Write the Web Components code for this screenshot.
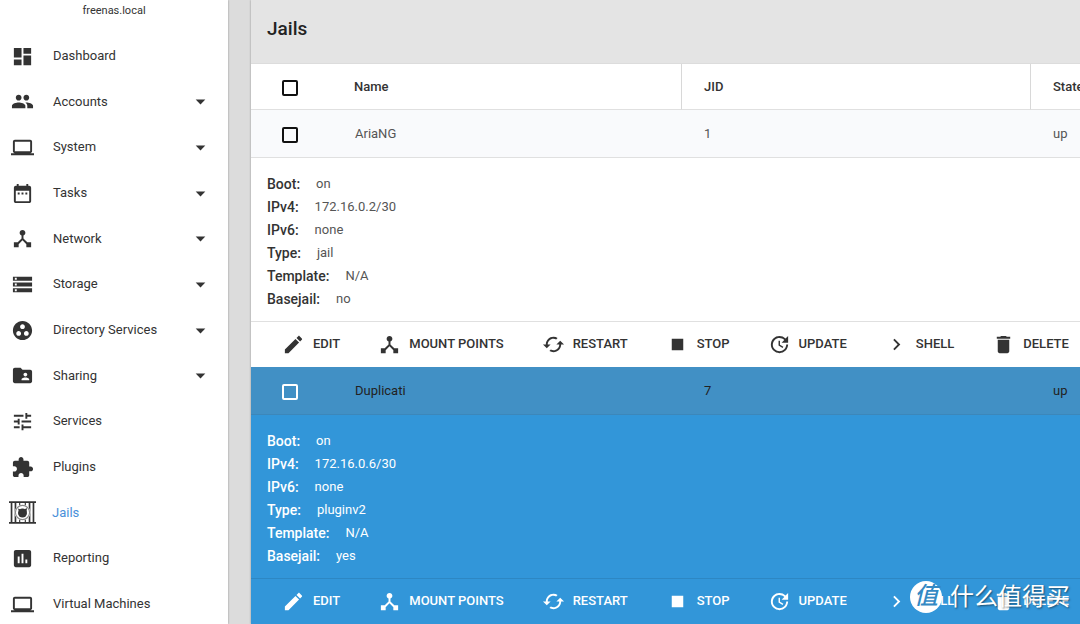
<!DOCTYPE html>
<html lang="en">
<head>
<meta charset="utf-8">
<title>Jails - freenas.local</title>
<style>
  html, body { margin: 0; height: 100%; }
  body { overflow: hidden; background: #dcdcdc; color: #333; font: 13px/20px Roboto, "Noto Sans CJK SC", sans-serif; }
</style>
</head>
<body>
<nas-shell>
  <side-nav slot="nav" host="freenas.local"></side-nav>
  <jails-card heading="Jails"></jails-card>
  <brand-mark slot="overlay" glyph="值">什么值得买</brand-mark>
</nas-shell>

<script>
const ICONS = {
  dashboard: '<path d="M3 13h8V3H3v10zm0 8h8v-6H3v6zm10 0h8V11h-8v10zm0-18v6h8V3h-8z"/>',
  people: '<path d="M16 11c1.66 0 2.99-1.34 2.99-3S17.66 5 16 5s-3 1.34-3 3 1.34 3 3 3zm-8 0c1.66 0 2.99-1.34 2.99-3S9.66 5 8 5 5 6.34 5 8s1.34 3 3 3zm0 2c-2.33 0-7 1.17-7 3.5V19h14v-2.5c0-2.33-4.67-3.5-7-3.5zm8 0c-.29 0-.62.02-.97.05 1.16.84 1.97 1.97 1.97 3.45V19h6v-2.5c0-2.33-4.67-3.5-7-3.5z"/>',
  laptop: '<path d="M20 18c1.1 0 1.99-.9 1.99-2L22 6c0-1.1-.9-2-2-2H4c-1.1 0-2 .9-2 2v10c0 1.1.9 2 2 2H0v2h24v-2h-4zM4 6h16v10H4V6z"/>',
  calendar: '<path d="M9 11H7v2h2v-2zm4 0h-2v2h2v-2zm4 0h-2v2h2v-2zm2-7h-1V2h-2v2H8V2H6v2H5c-1.11 0-1.99.9-1.99 2L3 20c0 1.1.89 2 2 2h14c1.1 0 2-.9 2-2V6c0-1.1-.9-2-2-2zm0 16H5V9h14v11z"/>',
  hub: '<path d="M17 16l-4-4V8.82C14.16 8.4 15 7.3 15 6c0-1.66-1.34-3-3-3S9 4.34 9 6c0 1.3.84 2.4 2 2.82V12l-4 4H3v5h5v-3.05l4-4.2 4 4.2V21h5v-5h-4z"/>',
  storage: '<path d="M2 20h20v-4H2v4zm2-3h2v2H4v-2zM2 4v4h20V4H2zm4 3H4V5h2v2zm-4 7h20v-4H2v4zm2-3h2v2H4v-2z"/>',
  directory: '<path d="M12 2C6.48 2 2 6.48 2 12s4.48 10 10 10 10-4.48 10-10S17.52 2 12 2zM8 17.5c-1.38 0-2.5-1.12-2.5-2.5s1.12-2.5 2.5-2.5 2.5 1.12 2.5 2.5-1.12 2.5-2.5 2.5zM9.5 8c0-1.38 1.12-2.5 2.5-2.5s2.5 1.12 2.5 2.5-1.12 2.5-2.5 2.5S9.5 9.38 9.5 8zm6.5 9.5c-1.38 0-2.5-1.12-2.5-2.5s1.12-2.5 2.5-2.5 2.5 1.12 2.5 2.5-1.12 2.5-2.5 2.5z"/>',
  sharing: '<path d="M20 6h-8l-2-2H4c-1.1 0-1.99.9-1.99 2L2 18c0 1.1.9 2 2 2h16c1.1 0 2-.9 2-2V8c0-1.1-.9-2-2-2zm-5 3c1.1 0 2 .9 2 2s-.9 2-2 2-2-.9-2-2 .9-2 2-2zm4 8h-8v-1c0-1.33 2.67-2 4-2s4 .67 4 2v1z"/>',
  tune: '<path d="M3 17v2h6v-2H3zM3 5v2h10V5H3zm10 16v-2h8v-2h-8v-2h-2v6h2zM7 9v2H3v2h4v2h2V9H7zm14 4v-2H11v2h10zm-6-4h2V7h4V5h-4V3h-2v6z"/>',
  plugin: '<path d="M20.5 11H19V7c0-1.1-.9-2-2-2h-4V3.5C13 2.12 11.88 1 10.5 1S8 2.12 8 3.5V5H4c-1.1 0-1.99.9-1.99 2v3.8H3.5c1.49 0 2.7 1.21 2.7 2.7s-1.21 2.7-2.7 2.7H2V20c0 1.1.9 2 2 2h3.8v-1.5c0-1.49 1.21-2.7 2.7-2.7 1.49 0 2.7 1.21 2.7 2.7V22H17c1.1 0 2-.9 2-2v-4h1.5c1.38 0 2.5-1.12 2.5-2.5S21.88 11 20.5 11z"/>',
  jail: '<path d="M0 2h24v1.500H0zM0 20.500h24V22H0zM1.500 3H3v18H1.500zM5 3h1.500v18H5zM17.500 3H19v18h-1.500zM21 3h1.500v18H21z"/><path d="M9 3h1v3H9zM14 3h1v3h-1zM9 18h1v3H9zM14 18h1v3h-1z"/><circle cx="12" cy="12" r="7" fill="#fff"/><circle cx="12" cy="12" r="6.300" fill="none" stroke="#888" stroke-width="1"/><circle cx="12" cy="12.500" r="4"/><path d="M8 8.500l3 1-2 2.500zM13 9.500l3-1.500-.5 4z"/>',
  report: '<path d="M19 3H5c-1.1 0-2 .9-2 2v14c0 1.1.9 2 2 2h14c1.1 0 2-.9 2-2V5c0-1.1-.9-2-2-2zM9 17H7v-7h2v7zm4 0h-2V7h2v10zm4 0h-2v-4h2v4z"/>',
  caret: '<path d="M7 10l5 5 5-5z"/>',
  edit: '<path d="M3 17.25V21h3.75L17.81 9.94l-3.75-3.75L3 17.25zM20.71 7.04c.39-.39.39-1.02 0-1.41l-2.34-2.34c-.39-.39-1.02-.39-1.41 0l-1.83 1.83 3.75 3.75 1.83-1.83z"/>',
  restart: '<path d="M19 8l-4 4h3c0 3.31-2.69 6-6 6-1.01 0-1.97-.25-2.8-.7l-1.46 1.46C8.97 19.54 10.43 20 12 20c4.42 0 8-3.58 8-8h3l-4-4zM6 12c0-3.31 2.69-6 6-6 1.01 0 1.97.25 2.8.7l1.46-1.46C15.03 4.46 13.57 4 12 4c-4.42 0-8 3.58-8 8H1l4 4 4-4H6z"/>',
  stop: '<path d="M6 6h12v12H6z"/>',
  update: '<path d="M21 10.12h-6.78l2.74-2.82c-2.73-2.7-7.15-2.8-9.88-.1-2.73 2.71-2.73 7.08 0 9.79 2.73 2.71 7.15 2.71 9.88 0C18.32 15.65 19 14.08 19 12.1h2c0 1.98-.88 4.55-2.64 6.29-3.51 3.48-9.21 3.48-12.72 0-3.5-3.47-3.53-9.11-.02-12.58 3.51-3.47 9.14-3.47 12.65 0L21 3v7.12zM12.5 8v4.25l3.5 2.08-.72 1.21L11 13V8h1.5z"/>',
  shell: '<path d="M10 6L8.59 7.41 13.17 12l-4.58 4.59L10 18l6-6z"/>',
  trash: '<path d="M6 19c0 1.1.9 2 2 2h8c1.1 0 2-.9 2-2V7H6v12zM19 4h-3.5l-1-1h-5l-1 1H5v2h14V4z"/>'
};

const NAV = [
  ['Dashboard', 'dashboard'], ['Accounts', 'people', true], ['System', 'laptop', true],
  ['Tasks', 'calendar', true], ['Network', 'hub', true], ['Storage', 'storage', true],
  ['Directory Services', 'directory', true], ['Sharing', 'sharing', true], ['Services', 'tune'],
  ['Plugins', 'plugin'], ['Jails', 'jail'], ['Reporting', 'report'], ['Virtual Machines', 'laptop']
];

const JAILS = [
  { name: 'AriaNG', jid: 1, state: 'up', info: { Boot: 'on', IPv4: '172.16.0.2/30', IPv6: 'none', Type: 'jail', Template: 'N/A', Basejail: 'no' } },
  { name: 'Duplicati', jid: 7, state: 'up', current: true, info: { Boot: 'on', IPv4: '172.16.0.6/30', IPv6: 'none', Type: 'pluginv2', Template: 'N/A', Basejail: 'yes' } }
];

const ACTIONS = [
  ['EDIT', 'edit'], ['MOUNT POINTS', 'hub'], ['RESTART', 'restart'], ['STOP', 'stop'],
  ['UPDATE', 'update'], ['SHELL', 'shell'], ['DELETE', 'trash']
];

class BaseElement extends HTMLElement {
  connectedCallback() {
    if (!this.shadowRoot) this.attachShadow({ mode: 'open' }).innerHTML = this.view();
  }
}

customElements.define('nas-icon', class extends BaseElement {
  view() {
    return `<style>
      :host { display: block; flex: none; width: 23px; height: 23px; }
      svg { display: block; width: 100%; height: 100%; fill: currentColor; }
    </style>
    <svg viewBox="0 0 24 24" aria-hidden="true">${ICONS[this.getAttribute('name')]}</svg>`;
  }
});

customElements.define('nas-shell', class extends BaseElement {
  view() {
    return `<style>
      :host { display: grid; grid-template-columns: 228px minmax(0, 1fr); height: 100vh; overflow: hidden; position: relative; }
      main { padding-left: 23px; min-width: 0; }
    </style>
    <slot name="nav"></slot>
    <main><slot></slot></main>
    <slot name="overlay"></slot>`;
  }
});

customElements.define('nav-item', class extends BaseElement {
  view() {
    const a = n => this.getAttribute(n);
    return `<style>
      :host { display: block; }
      a { display: flex; align-items: center; height: 100%; padding: 0 16px 0 11px; color: #333; text-decoration: none; }
      span { flex: 1; margin-left: 19px; }
      .active span { color: #4a90d9; margin-left: 16px; }
      .active nas-icon { width: 27px; height: 27px; margin-left: -2px; }
    </style>
    <a href="#${a('icon')}" ${this.hasAttribute('active') ? 'class="active" aria-current="page"' : ''}>
      <nas-icon name="${a('icon')}"></nas-icon><span>${a('label')}</span>
      ${this.hasAttribute('expandable') ? '<nas-icon name="caret"></nas-icon>' : ''}
    </a>`;
  }
});

customElements.define('side-nav', class extends BaseElement {
  view() {
    return `<style>
      :host { display: block; background: #fff; overflow: hidden; box-shadow: 0 0 2px rgba(0,0,0,.35); }
      header { height: 33px; font-size: 11px; line-height: 22px; text-align: center; }
      nav { display: grid; grid-auto-rows: 46px 45px 46px; }
    </style>
    <header>${this.getAttribute('host')}</header>
    <nav>${NAV.map(([label, icon, more]) =>
      `<nav-item label="${label}" icon="${icon}"${more ? ' expandable' : ''}${label === 'Jails' ? ' active' : ''}></nav-item>`).join('')}</nav>`;
  }
});

customElements.define('jail-info', class extends BaseElement {
  view() {
    const info = JAILS[this.getAttribute('index')].info;
    return `<style>
      :host { display: block; padding: 15px 16px 10px; }
      dl { margin: 0; }
      div { display: flex; gap: 16px; line-height: 23px; }
      dt { font-size: 14px; font-weight: 500; }
      dd { margin: 0; line-height: 22px; color: var(--value-color, #555); }
    </style>
    <dl>${Object.entries(info).map(([k, v]) => `<div><dt>${k}:</dt><dd>${v}</dd></div>`).join('')}</dl>`;
  }
});

customElements.define('action-bar', class extends BaseElement {
  view() {
    return `<style>
      :host { display: flex; align-items: center; gap: 38px; height: 44px; padding: 0 0 1px 31px; }
      button { display: flex; align-items: center; gap: 8px; padding: 0; border: 0; background: none; color: inherit; font: 500 13px/20px Roboto, sans-serif; white-space: nowrap; }
    </style>
    ${ACTIONS.map(([label, icon]) => `<button type="button"><nas-icon name="${icon}"></nas-icon>${label}</button>`).join('')}`;
  }
});

customElements.define('jails-card', class extends BaseElement {
  view() {
    const rows = JAILS.map((j, i) => `
      <tbody class="${j.current ? 'current' : ''}">
        <tr class="summary">
          <td class="pick"><input type="checkbox" aria-label="Select ${j.name}"></td>
          <td>${j.name}</td><td>${j.jid}</td><td>${j.state}</td>
        </tr>
        <tr class="info"><td colspan="4"><jail-info index="${i}"></jail-info></td></tr>
        <tr class="actions"><td colspan="4"><action-bar></action-bar></td></tr>
      </tbody>`).join('');
    return `<style>
      :host { display: block; overflow: hidden; background: #fff; box-shadow: 0 0 2px rgba(0,0,0,.35); }
      h1 { margin: 0; padding: 17px 16px 22px; border-bottom: 1px solid #dcdcdc; background: #e4e4e4; color: #222; font-size: 19px; line-height: 24px; font-weight: 500; }
      table { width: 100%; min-width: 1128px; table-layout: fixed; border-collapse: separate; border-spacing: 0; }
      th, td { box-sizing: border-box; padding: 0; text-align: left; }
      th { height: 46px; padding-left: 22px; font-weight: 500; border-bottom: 1px solid #e0e0e0; }
      th + th + th { border-left: 1px solid #d8d8d8; }
      .summary td { height: 48px; padding-left: 23px; color: #555; background: #f9fafc; border-bottom: 1px solid #e0e0e0; }
      th.pick, .summary td.pick { width: 81px; padding: 0 0 0 31px; }
      .info td { border-bottom: 1px solid #e0e0e0; }
      .current { background: #3296d9; color: #fff; --value-color: #fff; }
      .current .summary td { background: #4190c5; color: #222; border-color: #3c87ba; }
      .current .info td { border-color: #2d87c3; }
      input { display: block; appearance: none; box-sizing: border-box; width: 16px; height: 16px; margin: 2px 0 0; border: 2px solid #111; border-radius: 2px; }
      .current input { border-color: #fff; }
    </style>
    <h1>${this.getAttribute('heading')}</h1>
    <table>
      <thead><tr><th class="pick"><input type="checkbox" aria-label="Select all"></th><th>Name</th><th>JID</th><th>State</th></tr></thead>
      ${rows}
    </table>`;
  }
});

customElements.define('brand-mark', class extends BaseElement {
  view() {
    return `<style>
      :host { position: absolute; right: 10px; bottom: 11px; display: flex; align-items: center; gap: 8px; color: #fff; font-size: 24px; line-height: 32px; text-shadow: 1px 1px 2px rgba(0,0,0,.5); pointer-events: none; }
      b { width: 32px; height: 32px; border-radius: 50%; background: #fff; color: #3389c4; font-size: 24px; line-height: 31px; font-weight: 500; font-style: italic; text-align: center; text-shadow: none; }
    </style>
    <b>${this.getAttribute('glyph')}</b><span><slot></slot></span>`;
  }
});
</script>
</body>
</html>
